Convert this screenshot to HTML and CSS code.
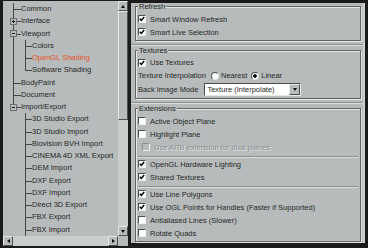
FILE: index.html
```html
<!DOCTYPE html>
<html lang="en">
<head>
    <meta charset="UTF-8">
    <title>Preferences - OpenGL Shading</title>
    <link rel="stylesheet" href="styles.css">
</head>
<body>
    <!-- Left: preference tree -->
    <div class="tree-pane">
        <div class="tree-body">
            <div class="tree">
                <div class="node l1"><span class="gutter"></span>Common</div>
                <div class="node l1"><span class="gutter"><span class="exp plus"></span></span>Interface</div>
                <div class="node l1"><span class="gutter"><span class="exp"></span></span>Viewport</div>
                <div class="node l2 in-parent"><span class="gutter"></span>Colors</div>
                <div class="node l2 in-parent active"><span class="gutter"></span>OpenGL Shading</div>
                <div class="node l2 in-parent last"><span class="gutter"></span>Software Shading</div>
                <div class="node l1"><span class="gutter"></span>BodyPaint</div>
                <div class="node l1"><span class="gutter"></span>Document</div>
                <div class="node l1 last"><span class="gutter"><span class="exp"></span></span>Import/Export</div>
                <div class="node l2"><span class="gutter"></span>3D Studio Export</div>
                <div class="node l2"><span class="gutter"></span>3D Studio Import</div>
                <div class="node l2"><span class="gutter"></span>Biovision BVH Import</div>
                <div class="node l2"><span class="gutter"></span>CINEMA 4D XML Export</div>
                <div class="node l2"><span class="gutter"></span>DEM Import</div>
                <div class="node l2"><span class="gutter"></span>DXF Export</div>
                <div class="node l2"><span class="gutter"></span>DXF Import</div>
                <div class="node l2"><span class="gutter"></span>Direct 3D Export</div>
                <div class="node l2"><span class="gutter"></span>FBX Export</div>
                <div class="node l2"><span class="gutter"></span>FBX Import</div>
            </div>
            <div class="vscroll">
                <div class="sb-btn"><span class="tri up"></span></div>
                <div class="sb-thumb"></div>
                <div class="sb-track"></div>
                <div class="sb-btn"><span class="tri down"></span></div>
            </div>
        </div>
        <div class="hscroll">
            <div class="sb-btn"><span class="tri left"></span></div>
            <div class="sb-track"></div>
            <div class="sb-btn"><span class="tri right"></span></div>
            <div class="sb-corner"></div>
        </div>
    </div>

    <!-- Right: settings page -->
    <div class="settings">
        <div class="section">
            <fieldset>
                <legend>Refresh</legend>
                <div class="check"><span class="box on"><svg viewBox="0 0 6 6"><polyline points="0.8,2.8 2.3,4.4 5.2,1.1"/></svg></span>Smart Window Refresh</div>
                <div class="check"><span class="box on"><svg viewBox="0 0 6 6"><polyline points="0.8,2.8 2.3,4.4 5.2,1.1"/></svg></span>Smart Live Selection</div>
            </fieldset>
        </div>

        <div class="section">
            <fieldset>
                <legend>Textures</legend>
                <div class="check"><span class="box on"><svg viewBox="0 0 6 6"><polyline points="0.8,2.8 2.3,4.4 5.2,1.1"/></svg></span>Use Textures</div>
                <div class="field">
                    <span>Texture Interpolation</span>
                    <span class="radio first"></span><span class="radio-text">Nearest</span>
                    <span class="radio on"></span><span class="radio-text">Linear</span>
                </div>
                <div class="field tall">
                    <span>Back Image Mode</span>
                    <div class="select">
                        <span class="value">Texture (Interpolate)</span>
                        <span class="drop"><span class="tri down"></span></span>
                    </div>
                </div>
            </fieldset>
        </div>

        <div class="section last">
            <fieldset>
                <legend>Extensions</legend>
                <div class="check"><span class="box"></span>Active Object Plane</div>
                <div class="check"><span class="box"></span>Highlight Plane</div>
                <div class="check sub disabled"><span class="box"></span>Use ARB extension for dual planes</div>
                <div class="rule"></div>
                <div class="check"><span class="box on"><svg viewBox="0 0 6 6"><polyline points="0.8,2.8 2.3,4.4 5.2,1.1"/></svg></span>OpenGL Hardware Lighting</div>
                <div class="check"><span class="box on"><svg viewBox="0 0 6 6"><polyline points="0.8,2.8 2.3,4.4 5.2,1.1"/></svg></span>Shared Textures</div>
                <div class="rule"></div>
                <div class="check"><span class="box on"><svg viewBox="0 0 6 6"><polyline points="0.8,2.8 2.3,4.4 5.2,1.1"/></svg></span>Use Line Polygons</div>
                <div class="check"><span class="box on"><svg viewBox="0 0 6 6"><polyline points="0.8,2.8 2.3,4.4 5.2,1.1"/></svg></span>Use OGL Points for Handles (Faster if Supported)</div>
                <div class="check"><span class="box"></span>Antialiased Lines (Slower)</div>
                <div class="check"><span class="box"></span>Rotate Quads</div>
            </fieldset>
        </div>
    </div>
</body>
</html>
```

FILE: styles.css
```css
* {
    box-sizing: border-box;
}

body {
    --panel: #b7bbbb;
    --ln: #444848;
    --light: #e4e8e8;
    --dark: #4e5252;
    margin: 0;
    height: 248px;
    padding: 1px 3px 2px 3px;
    display: flex;
    gap: 3px;
    overflow: hidden;
    background: #1b1b1b;
    font-family: 'Liberation Sans', Arial, sans-serif;
    font-size: 7.5px;
    color: #262828;
}

/* ---------- tree ---------- */

.tree-pane {
    width: 125px;
    flex: none;
    display: flex;
    flex-direction: column;
    background: var(--panel);
}

.tree-body {
    flex: 1;
    display: flex;
    min-height: 0;
}

.tree {
    flex: 1;
    padding-top: 2px;
    overflow: hidden;
}

.node {
    display: flex;
    height: 12.25px;
    line-height: 12.25px;
    white-space: nowrap;
}

.node.active {
    color: #e5532e;
}

.gutter {
    flex: none;
    display: flex;
    align-items: center;
    background-repeat: no-repeat;
    background-image: linear-gradient(var(--ln), var(--ln)), linear-gradient(var(--ln), var(--ln));
}

.l1 .gutter {
    width: 18px;
    background-position: 10px 0, 10px 6px;
    background-size: 1px 100%, 8px 1px;
}

.l1.last .gutter {
    background-size: 1px 7px, 8px 1px;
}

.l2 .gutter {
    width: 29px;
    background-position: 22px 0, 22px 6px;
    background-size: 1px 100%, 7px 1px;
}

.l2.last .gutter {
    background-size: 1px 7px, 7px 1px;
}

.l2.in-parent .gutter {
    background-image: linear-gradient(var(--ln), var(--ln)), linear-gradient(var(--ln), var(--ln)), linear-gradient(var(--ln), var(--ln));
    background-position: 22px 0, 22px 6px, 10px 0;
    background-size: 1px 100%, 7px 1px, 1px 100%;
}

.l2.in-parent.last .gutter {
    background-size: 1px 7px, 7px 1px, 1px 100%;
}

.exp {
    width: 7px;
    height: 7px;
    margin-left: 7px;
    border: 1px solid #6a6e6e;
    background: linear-gradient(#1a1a1a, #1a1a1a) no-repeat center / 3px 1px, var(--panel);
}

.exp.plus {
    background: linear-gradient(#1a1a1a, #1a1a1a) no-repeat center / 3px 1px,
        linear-gradient(#1a1a1a, #1a1a1a) no-repeat center / 1px 3px, var(--panel);
}

/* ---------- scrollbars ---------- */

.vscroll {
    width: 10px;
    flex: none;
    display: flex;
    flex-direction: column;
}

.hscroll {
    height: 10px;
    flex: none;
    display: flex;
}

.sb-btn,
.sb-thumb {
    flex: none;
    width: 10px;
    height: 10px;
    display: flex;
    align-items: center;
    justify-content: center;
    background: var(--panel);
    border: 1px solid;
    border-color: var(--light) var(--dark) var(--dark) var(--light);
}

.sb-thumb {
    height: 109px;
}

.sb-track {
    flex: 1;
    background: #c9cdcd;
}

.sb-corner {
    width: 10px;
    flex: none;
    background: var(--panel);
}

.tri {
    width: 0;
    height: 0;
    border: 2.5px solid transparent;
}

.tri.up {
    border-bottom: 3px solid #111;
    border-top-width: 0;
}

.tri.down {
    border-top: 3px solid #111;
    border-bottom-width: 0;
}

.tri.left {
    border-right: 3px solid #111;
    border-left-width: 0;
}

.tri.right {
    border-left: 3px solid #111;
    border-right-width: 0;
}

/* ---------- settings ---------- */

.settings {
    width: 234px;
    flex: none;
    height: 240px;
    margin-top: 2px;
    overflow: hidden;
    background: var(--panel);
    border-right: 2px solid #cdd1d1;
}

.section {
    padding: 0 2px 3px 4px;
    border-bottom: 1px solid #8e9292;
    box-shadow: 0 1px 0 #d8dcdc;
}

.section + .section {
    padding-top: 1px;
    margin-top: 1px;
}

.section.last {
    border-bottom: none;
    box-shadow: none;
}

fieldset {
    margin: 0;
    padding: 2.5px 2px 1px 2px;
    min-inline-size: 0;
    border: 1px solid #5f6363;
    box-shadow: 1px 1px 0 var(--light), inset 1px 1px 0 var(--light);
}

legend {
    padding: 0 1px;
    line-height: 7px;
    background: var(--panel);
}

.check {
    display: flex;
    align-items: center;
    gap: 4px;
    height: 13px;
    white-space: nowrap;
}

.check.sub {
    padding-left: 4px;
}

.box {
    width: 8px;
    height: 8px;
    flex: none;
    display: flex;
    background: #fff;
    border: 1px solid;
    border-color: #4a4e4e #eef2f2 #eef2f2 #4a4e4e;
}

.box svg {
    width: 6px;
    height: 6px;
    fill: none;
    stroke: #000;
    stroke-width: 1.5;
}

.disabled {
    color: #8a8e8e;
    text-shadow: 1px 1px 0 #e8ecec;
}

.disabled .box {
    background: var(--panel);
    border-color: #8a8e8e #e8ecec #e8ecec #8a8e8e;
}

.rule {
    height: 2px;
    margin-top: 2px;
    border-top: 1px solid #8a8e8e;
    border-bottom: 1px solid #dde1e1;
}

.field {
    display: flex;
    align-items: center;
    height: 13px;
    white-space: nowrap;
}

.field.tall {
    height: 15px;
}

.radio {
    width: 8px;
    height: 8px;
    flex: none;
    margin-left: 4px;
    border-radius: 50%;
    border: 1px solid;
    border-color: #4a4e4e #dfe3e3 #dfe3e3 #4a4e4e;
    background: #fff;
}

.radio.first {
    margin-left: 5px;
}

.radio.on {
    background: radial-gradient(circle, #000 1.5px, #fff 2px);
}

.radio-text {
    margin-left: 2px;
}

.select {
    width: 97px;
    height: 13px;
    margin-left: 6px;
    display: flex;
    background: #fff;
    border: 1px solid;
    border-color: #4a4e4e #e4e8e8 #e4e8e8 #4a4e4e;
}

.select .value {
    flex: 1;
    padding-left: 2px;
    line-height: 11px;
}

.select .drop {
    width: 11px;
    flex: none;
    display: flex;
    align-items: center;
    justify-content: center;
    background: var(--panel);
    border: 1px solid;
    border-color: var(--light) var(--dark) var(--dark) var(--light);
}
```
